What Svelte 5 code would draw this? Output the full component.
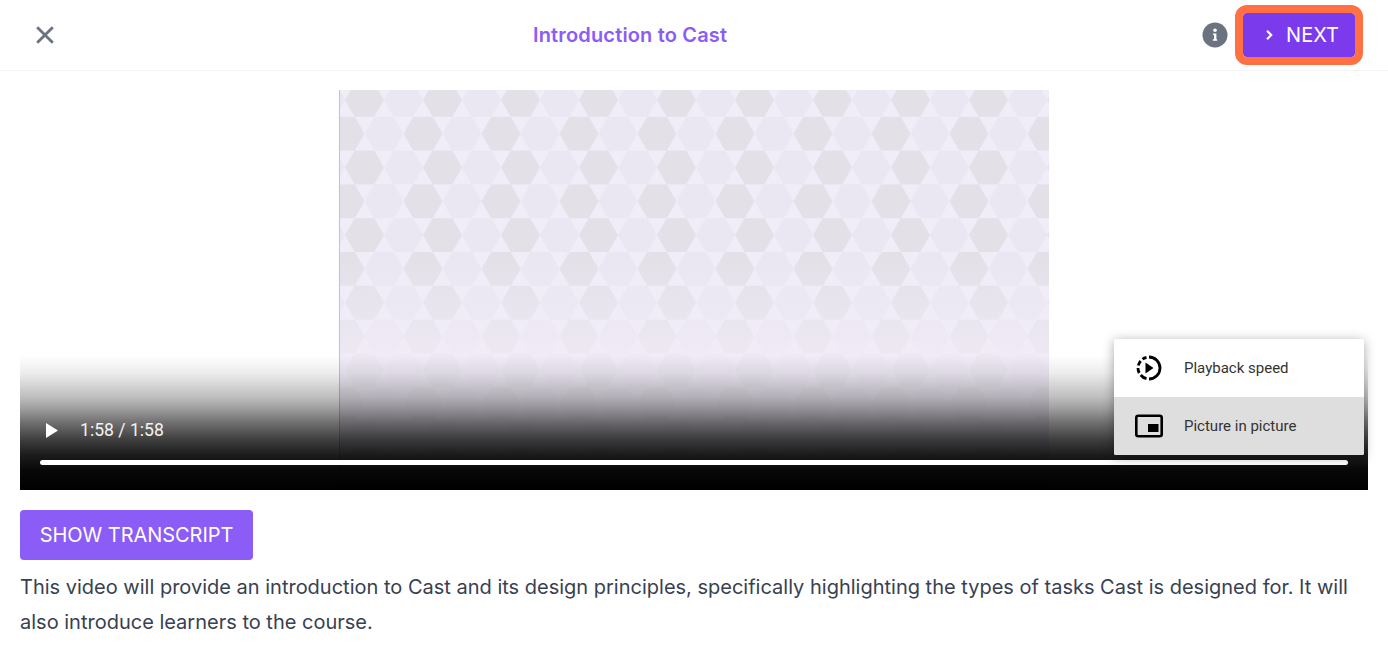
<script>
  const title = 'Introduction to Cast';
  const description =
    'This video will provide an introduction to Cast and its design principles, specifically highlighting the types of tasks Cast is designed for. It will also introduce learners to the course.';
</script>

<div class="page">
  <header class="topbar">
    <button class="close" aria-label="Close">
      <svg width="18" height="18" viewBox="0 0 18 18">
        <path d="M1.2 1.2 L16.8 16.8 M16.8 1.2 L1.2 16.8" stroke="#6b7280" stroke-width="2.8" fill="none" />
      </svg>
    </button>
    <h1>{title}</h1>
    <div class="actions">
      <span class="info">
        <svg width="26" height="26" viewBox="0 0 26 26">
          <circle cx="13" cy="13" r="12.5" fill="#6b7280" />
          <circle cx="13" cy="8.2" r="1.8" fill="#fff" />
          <path d="M11 11.4 H14.4 V17.2 H15.2 V18.8 H10.8 V17.2 H12 V13 H11 Z" fill="#fff" />
        </svg>
      </span>
      <button class="next">
        <svg width="9" height="12" viewBox="0 0 9 12">
          <path d="M2 1.8 L6.2 6 L2 10.2" stroke="#fff" stroke-width="2.2" fill="none" />
        </svg>
        NEXT
      </button>
    </div>
  </header>

  <section class="player">
    <div class="frame">
      <svg class="hexes" width="100%" height="100%">
        <defs>
          <pattern id="hex" width="78" height="67.6" patternUnits="userSpaceOnUse" x="5" y="-7">
            <rect width="78" height="67.6" fill="#f1edf8" />
            <polygon points="0,16.9 9.75,0 29.25,0 39,16.9 29.25,33.8 9.75,33.8" fill="#e4e0e8" />
            <polygon points="39,16.9 48.75,0 68.25,0 78,16.9 68.25,33.8 48.75,33.8" fill="#eae6f2" />
            <polygon points="19.5,50.7 29.25,33.8 48.75,33.8 58.5,50.7 48.75,67.6 29.25,67.6" fill="#eae6f2" />
            <polygon points="58.5,50.7 68.25,33.8 87.75,33.8 97.5,50.7 87.75,67.6 68.25,67.6" fill="#e4e0e8" />
            <polygon points="-19.5,50.7 -9.75,33.8 9.75,33.8 19.5,50.7 9.75,67.6 -9.75,67.6" fill="#e4e0e8" />
          </pattern>
        </defs>
        <rect width="100%" height="100%" fill="url(#hex)" />
      </svg>
    </div>
    <div class="shade"></div>
    <div class="controls">
      <div class="buttons">
        <svg width="12" height="15" viewBox="0 0 12 15"><path d="M0 0 L12 7.5 L0 15 Z" fill="#fff" /></svg>
        <span class="time">1:58 / 1:58</span>
      </div>
      <div class="track"></div>
    </div>
    <ul class="menu">
      <li>
        <svg width="28" height="26" viewBox="0 0 28 26">
          <path d="M14 2 A11 11 0 0 1 14 24" stroke="#000" stroke-width="2.8" fill="none" />
          <path d="M11.5 2.3 A11 11 0 0 0 7.5 4.2 M5.7 6 A11 11 0 0 0 3.3 10.5 M3 13 A11 11 0 0 0 4.2 18 M5.7 20 A11 11 0 0 0 11.5 23.7" stroke="#000" stroke-width="2.8" fill="none" />
          <path d="M10.5 7.5 L18.5 13 L10.5 18.5 Z" fill="#000" />
        </svg>
        <span>Playback speed</span>
      </li>
      <li class="active">
        <svg width="28" height="24" viewBox="0 0 28 24">
          <rect x="1.3" y="1.8" width="25.4" height="20.4" rx="2" stroke="#000" stroke-width="2.6" fill="none" />
          <rect x="13" y="10" width="10.5" height="8" fill="#000" />
        </svg>
        <span>Picture in picture</span>
      </li>
    </ul>
  </section>

  <button class="transcript">SHOW TRANSCRIPT</button>
  <p class="description">{description}</p>
</div>

<style>
  :global(body) {
    background: #fff;
    font-family: Inter, "Liberation Sans", sans-serif;
  }

  .page {
    height: 666px;
    overflow: hidden;
  }

  .topbar {
    height: 70px;
    display: flex;
    align-items: center;
    justify-content: space-between;
    border-bottom: 1px solid #f3f4f6;
    padding: 0 25px 0 36px;
    position: relative;
  }

  .close {
    border: none;
    background: none;
    padding: 0;
    display: flex;
    cursor: pointer;
  }

  h1 {
    margin: 0;
    font-size: 20px;
    line-height: 28px;
    font-weight: 600;
    letter-spacing: 0.16px;
    color: #8b5cf6;
    position: absolute;
    left: 533px;
    top: 21px;
  }

  .actions {
    display: flex;
    align-items: center;
    gap: 7px;
  }

  .info {
    display: flex;
  }

  .next {
    box-sizing: border-box;
    width: 128px;
    height: 60px;
    border: 8px solid #ff7043;
    border-radius: 12px;
    background: #7c3aed;
    background-clip: padding-box;
    color: #fff;
    font-family: Inter, sans-serif;
    font-size: 20px;
    display: flex;
    align-items: center;
    justify-content: center;
    gap: 12px;
    cursor: pointer;
    padding: 0 0 0 6px;
  }

  .player {
    position: relative;
    height: 400px;
    margin: 19px 20px 0;
    background: #fff;
    display: flex;
    justify-content: center;
  }

  .frame {
    width: 710px;
    border-left: 1px solid #c4c1c8;
    box-sizing: border-box;
    height: 400px;
    position: relative;
    filter: blur(0.7px);
  }

  .frame::after {
    content: '';
    position: absolute;
    inset: 0;
    background: linear-gradient(
      to bottom,
      rgba(240, 235, 246, 0) 42%,
      rgba(240, 235, 246, 0.7) 65%,
      rgba(240, 235, 246, 0.85) 100%
    );
  }

  .hexes {
    display: block;
  }

  .shade {
    position: absolute;
    left: 0;
    right: 0;
    bottom: 0;
    height: 135px;
    background: linear-gradient(
      to bottom,
      rgba(0, 0, 0, 0) 0%,
      rgba(0, 0, 0, 0.07) 13%,
      rgba(0, 0, 0, 0.25) 31%,
      rgba(0, 0, 0, 0.37) 39%,
      rgba(0, 0, 0, 0.56) 50%,
      rgba(0, 0, 0, 0.76) 63%,
      rgba(0, 0, 0, 0.89) 74%,
      rgba(0, 0, 0, 0.97) 85%,
      rgba(0, 0, 0, 1) 100%
    );
  }

  .controls {
    position: absolute;
    left: 20px;
    right: 20px;
    bottom: 25px;
    color: #fff;
  }

  .buttons {
    display: flex;
    align-items: center;
    gap: 22px;
    padding-left: 6px;
    margin-bottom: 20px;
  }

  .time {
    font-family: Roboto, sans-serif;
    font-size: 17.6px;
    color: #f2f2f2;
  }

  .track {
    height: 5px;
    border-radius: 3px;
    background: #fff;
  }

  .menu {
    position: absolute;
    right: 4px;
    top: 249px;
    width: 250px;
    margin: 0;
    padding: 0;
    list-style: none;
    background: #fff;
    border-radius: 2px;
    box-shadow: 0 2px 12px rgba(0, 0, 0, 0.35);
    font-family: Roboto, sans-serif;
    font-size: 15px;
    color: #333;
    overflow: hidden;
  }

  .menu li {
    height: 58px;
    display: flex;
    align-items: center;
    gap: 21px;
    padding-left: 21px;
  }

  .menu li.active {
    background: #dedede;
  }

  .transcript {
    display: block;
    margin: 20px 0 0 20px;
    width: 233px;
    height: 50px;
    border: none;
    border-radius: 4px;
    background: #8b5cf6;
    color: #fff;
    font-family: Inter, sans-serif;
    font-size: 20px;
    letter-spacing: -0.05px;
    cursor: pointer;
    padding: 0;
  }

  .description {
    margin: 10px 20px 0;
    font-size: 20px;
    line-height: 35px;
    color: #374151;
  }
</style>
